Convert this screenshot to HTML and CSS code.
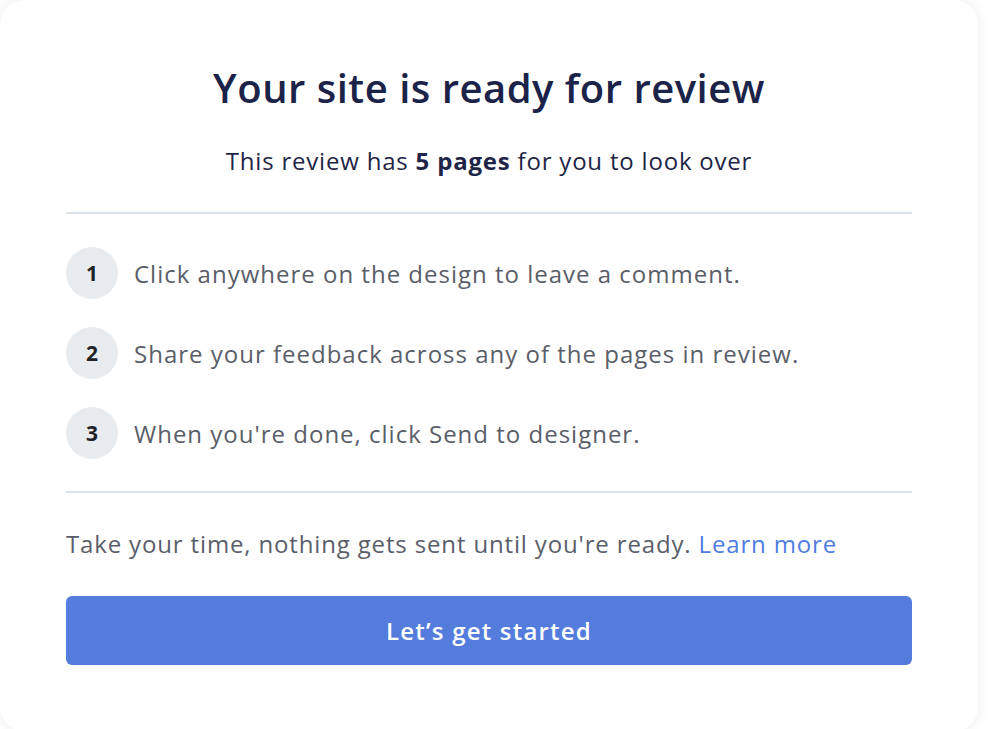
FILE: index.html
```html
<!doctype html>
<html lang="en">
  <head>
    <meta charset="UTF-8" />
    <meta name="viewport" content="width=device-width, initial-scale=1.0" />
    <title>Review ready</title>
    <link rel="stylesheet" href="styles.css">
  </head>
  <body>
    <div class="review-card">
      <h1 class="review-title">Your site is ready for review</h1>
      <p class="review-subtitle">This review has <strong>5 pages</strong> for you to look over</p>

      <hr class="divider" />

      <ol class="steps">
        <li class="step"><span class="step-num">1</span><span>Click anywhere on the design to leave a comment.</span></li>
        <li class="step"><span class="step-num">2</span><span>Share your feedback across any of the pages in review.</span></li>
        <li class="step"><span class="step-num">3</span><span>When you're done, click Send to designer.</span></li>
      </ol>

      <hr class="divider" />

      <p class="review-note">Take your time, nothing gets sent until you're ready. <a href="#" class="learn-link">Learn more</a></p>

      <button class="start-btn" type="button">Let’s get started</button>
    </div>
  </body>
</html>
```

FILE: styles.css
```css
body {
  margin: 0;
  background: #ffffff;
  font-family: "Open Sans", "Noto Sans", sans-serif;
  -webkit-font-smoothing: antialiased;
}

/* Modal card */
.review-card {
  box-sizing: border-box;
  width: 978px;
  height: 731px;
  padding: 63px 66px 0;
  background: #ffffff;
  border-radius: 24px;
  box-shadow: 0 0 14px rgba(0, 0, 0, 0.08);
  display: flex;
  flex-direction: column;
}

.review-title {
  margin: 0;
  font-size: 40px;
  line-height: 50px;
  font-weight: 600;
  letter-spacing: 0.5px;
  color: #1c2349;
  text-align: center;
}

.review-subtitle {
  margin: 33px 0 0;
  font-size: 24px;
  line-height: 30px;
  letter-spacing: 0.8px;
  color: #1f2547;
  text-align: center;
}

.review-subtitle strong {
  font-weight: 700;
}

.divider {
  margin: 36px 0 0;
  border: 0;
  height: 2px;
  background: #dbe2e9;
}

/* Numbered steps */
.steps {
  list-style: none;
  margin: 33px 0 0;
  padding: 0;
  display: flex;
  flex-direction: column;
  gap: 28px;
}

.step {
  display: flex;
  align-items: center;
  gap: 16px;
  font-size: 24px;
  letter-spacing: 1px;
  color: #5a5e69;
}

.step-num {
  flex: none;
  width: 52px;
  height: 52px;
  border-radius: 50%;
  background: #e9ecee;
  color: #1f2329;
  font-weight: 700;
  font-size: 21px;
  letter-spacing: 0;
  display: flex;
  align-items: center;
  justify-content: center;
}

.steps + .divider {
  margin-top: 32px;
}

.review-note {
  margin: 36px 0 0;
  font-size: 24px;
  line-height: 30px;
  letter-spacing: 0.85px;
  color: #5a5e69;
}

.learn-link {
  color: #4f7ddf;
  text-decoration: none;
}

.start-btn {
  margin-top: 37px;
  height: 69px;
  border: 0;
  border-radius: 6px;
  background: #537cdc;
  color: #ffffff;
  font-family: inherit;
  font-size: 24px;
  font-weight: 600;
  letter-spacing: 1.2px;
  cursor: pointer;
}
```
